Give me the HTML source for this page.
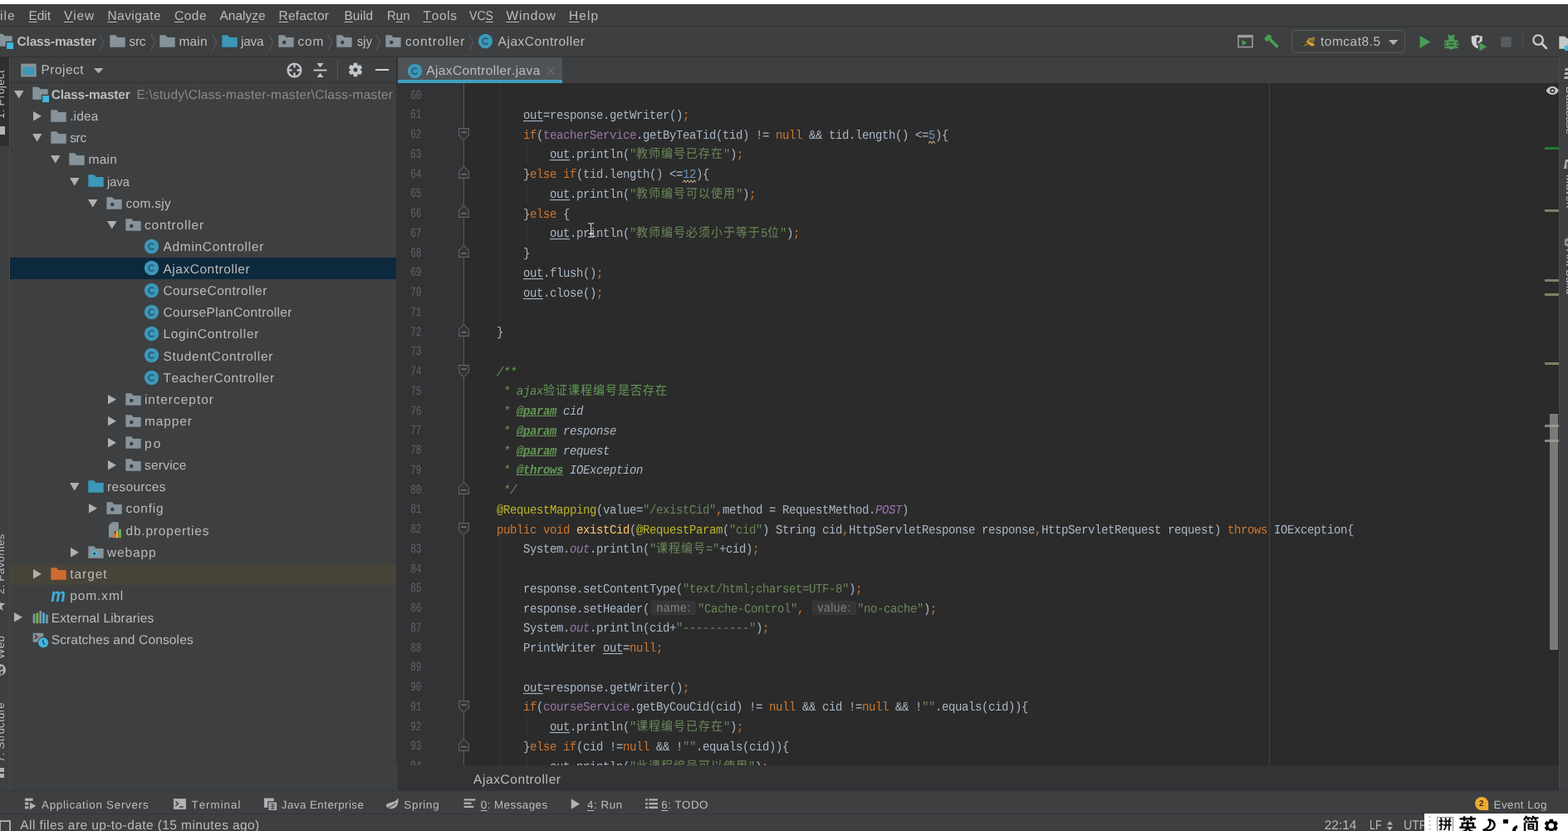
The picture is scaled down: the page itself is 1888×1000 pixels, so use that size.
<!DOCTYPE html>
<html><head><meta charset="utf-8"><title>AjaxController.java</title>
<style>
html,body{margin:0;padding:0}
body{width:1888px;height:1000px;overflow:hidden;background:#3d3f41;position:relative;font-family:"Liberation Sans",sans-serif;text-decoration-skip-ink:none;text-rendering:geometricPrecision;font-kerning:none}
#w{position:absolute;left:0;top:0;width:1888px;height:1000px;overflow:hidden;background:#3d3f41;will-change:transform}
.t{position:absolute;white-space:pre;line-height:1;font-family:"Liberation Sans",sans-serif}
.t u{text-decoration:underline;text-underline-offset:1.5px;text-decoration-thickness:1px}
.r{position:absolute;box-sizing:border-box}
.i{position:absolute;overflow:visible}
#ed{position:absolute;left:478px;top:100px;width:1399px;height:821px;background:#2b2b2b;overflow:hidden}
#code{position:absolute;left:0;top:0;width:1888px;height:921px;overflow:hidden;clip-path:inset(100px 11px 0 479px)}
.cl{position:absolute;left:566px;height:23.75px;line-height:23.75px;white-space:pre;font-family:"Liberation Mono",monospace;font-size:14px;letter-spacing:-0.4014px;color:#a9b7c6;transform:scaleY(1.09);transform-origin:0 15.6px}
.cl span{display:inline-block;height:23.75px;vertical-align:top}
.ln{position:absolute;left:494.2px;height:23.75px;line-height:23.75px;font-family:"Liberation Mono",monospace;font-size:11.2px;color:#606366;letter-spacing:-.1px;transform:scaleY(1.4)}
.cl span.z{font-family:"Liberation Mono","Noto Sans CJK SC",monospace;font-size:14px;letter-spacing:1px;font-style:normal}
.k{color:#cc7832}.s{color:#6a8759}.n{color:#6897bb}.a{color:#bbb529}.f{color:#9876aa}.fi{color:#9876aa;font-style:italic}
.m{color:#ffc66d}.c{color:#629755;font-style:italic}.cc{color:#629755}.cv{color:#a9b7c6;font-style:italic}.ct{color:#629755;font-style:italic;font-weight:bold;text-decoration:underline}
.u{text-decoration:underline;text-decoration-thickness:1px;text-underline-offset:2px}
.nw{color:#6897bb;position:relative}.wv{position:absolute;left:0;top:16.2px;overflow:visible}
.hint{position:relative}
.hint b{position:absolute;left:2px;top:1.1px;height:15.6px;line-height:16.4px;font:13.8px "Liberation Sans",sans-serif;letter-spacing:.55px;color:#808080;background:#363636;border-radius:2px;padding:0 6.5px;font-weight:normal}
</style></head>
<body>
<div id="w">
<div class="r" style="left:0px;top:0px;width:1888px;height:5px;background:#ffffff;"></div>
<div class="r" style="left:0px;top:31px;width:1888px;height:1px;background:#323536;"></div>
<span class="t" style="left:0.00px;top:11.98px;font-size:15.5px;color:#bbbbbb;letter-spacing:0.996px;">ile</span>
<span class="t" style="left:34.50px;top:11.98px;font-size:15.5px;color:#bbbbbb;letter-spacing:-0.070px;"><u>E</u>dit</span>
<span class="t" style="left:77.00px;top:11.98px;font-size:15.5px;color:#bbbbbb;letter-spacing:0.894px;"><u>V</u>iew</span>
<span class="t" style="left:129.50px;top:11.98px;font-size:15.5px;color:#bbbbbb;letter-spacing:0.403px;"><u>N</u>avigate</span>
<span class="t" style="left:210.00px;top:11.98px;font-size:15.5px;color:#bbbbbb;letter-spacing:0.481px;"><u>C</u>ode</span>
<span class="t" style="left:264.50px;top:11.98px;font-size:15.5px;color:#bbbbbb;letter-spacing:-0.024px;">Analy<u>z</u>e</span>
<span class="t" style="left:335.50px;top:11.98px;font-size:15.5px;color:#bbbbbb;letter-spacing:0.274px;"><u>R</u>efactor</span>
<span class="t" style="left:414.50px;top:11.98px;font-size:15.5px;color:#bbbbbb;letter-spacing:0.008px;"><u>B</u>uild</span>
<span class="t" style="left:465.50px;top:11.98px;font-size:15.5px;color:#bbbbbb;transform-origin:0 0;transform:scaleX(0.9671);">R<u>u</u>n</span>
<span class="t" style="left:509.50px;top:11.98px;font-size:15.5px;color:#bbbbbb;letter-spacing:0.654px;"><u>T</u>ools</span>
<span class="t" style="left:565.00px;top:11.98px;font-size:15.5px;color:#bbbbbb;transform-origin:0 0;transform:scaleX(0.9099);">VC<u>S</u></span>
<span class="t" style="left:609.50px;top:11.98px;font-size:15.5px;color:#bbbbbb;letter-spacing:0.874px;"><u>W</u>indow</span>
<span class="t" style="left:685.00px;top:11.98px;font-size:15.5px;color:#bbbbbb;letter-spacing:1.040px;"><u>H</u>elp</span>
<div class="r" style="left:0px;top:67.6px;width:1888px;height:1px;background:#313335;"></div>
<svg class="i" style="left:-5.5px;top:38px;" width="21" height="21" viewBox="0 0 16 16"><path d="M1 2h5.2l1.8 2H15v5H9v4.5H1z" fill="#87939a"/><rect x="10" y="10" width="6" height="6" fill="#40b6e0"/></svg>
<span class="t" style="left:20.50px;top:42.58px;font-size:15.5px;color:#bbbbbb;letter-spacing:-0.169px;font-weight:bold;">Class-master</span>
<svg class="i" style="left:130.7px;top:38.5px;" width="21" height="21" viewBox="0 0 16 16"><path d="M1 2.5h5.2l1.8 2H15v9H1z" fill="#87939a"/></svg>
<span class="t" style="left:155.50px;top:42.58px;font-size:15.5px;color:#bbbbbb;letter-spacing:-0.331px;">src</span>
<svg class="i" style="left:190.7px;top:38.5px;" width="21" height="21" viewBox="0 0 16 16"><path d="M1 2.5h5.2l1.8 2H15v9H1z" fill="#87939a"/></svg>
<span class="t" style="left:215.50px;top:42.58px;font-size:15.5px;color:#bbbbbb;letter-spacing:0.134px;">main</span>
<svg class="i" style="left:265.7px;top:38.5px;" width="21" height="21" viewBox="0 0 16 16"><path d="M1 2.5h5.2l1.8 2H15v9H1z" fill="#3d97b8"/></svg>
<span class="t" style="left:290.00px;top:42.58px;font-size:15.5px;color:#bbbbbb;letter-spacing:-0.312px;">java</span>
<svg class="i" style="left:333.7px;top:38.5px;" width="21" height="21" viewBox="0 0 16 16"><path d="M1 2.5h5.2l1.8 2H15v9H1z" fill="#87939a"/><circle cx="6.300" cy="9.100" r="1.750" fill="#3c3f41"/></svg>
<span class="t" style="left:358.50px;top:42.58px;font-size:15.5px;color:#bbbbbb;letter-spacing:0.859px;">com</span>
<svg class="i" style="left:404.2px;top:38.5px;" width="21" height="21" viewBox="0 0 16 16"><path d="M1 2.5h5.2l1.8 2H15v9H1z" fill="#87939a"/><circle cx="6.300" cy="9.100" r="1.750" fill="#3c3f41"/></svg>
<span class="t" style="left:429.50px;top:42.58px;font-size:15.5px;color:#bbbbbb;transform-origin:0 0;transform:scaleX(0.9502);">sjy</span>
<svg class="i" style="left:463.2px;top:38.5px;" width="21" height="21" viewBox="0 0 16 16"><path d="M1 2.5h5.2l1.8 2H15v9H1z" fill="#87939a"/><circle cx="6.300" cy="9.100" r="1.750" fill="#3c3f41"/></svg>
<span class="t" style="left:488.00px;top:42.58px;font-size:15.5px;color:#bbbbbb;letter-spacing:0.861px;">controller</span>
<svg class="i" style="left:574.3px;top:39px;" width="21" height="21" viewBox="0 0 16 16"><circle cx="8" cy="8" r="6.600" fill="#3d97b8"/><path d="M10.200 9.700a2.700 2.700 0 1 1 0-3.400" fill="none" stroke="#255a70" stroke-width="1.250"/></svg>
<span class="t" style="left:599.50px;top:42.58px;font-size:15.5px;color:#bbbbbb;letter-spacing:0.550px;">AjaxController</span>
<svg class="i" style="left:119.3px;top:40.5px;" width="7" height="20" viewBox="0 0 7 20"><path d="M.8 .5l5 9.5-5 9.500" fill="none" stroke="#56595b" stroke-width="1.2"/></svg>
<svg class="i" style="left:181.3px;top:40.5px;" width="7" height="20" viewBox="0 0 7 20"><path d="M.8 .5l5 9.5-5 9.500" fill="none" stroke="#56595b" stroke-width="1.2"/></svg>
<svg class="i" style="left:255.3px;top:40.5px;" width="7" height="20" viewBox="0 0 7 20"><path d="M.8 .5l5 9.5-5 9.500" fill="none" stroke="#56595b" stroke-width="1.2"/></svg>
<svg class="i" style="left:323.3px;top:40.5px;" width="7" height="20" viewBox="0 0 7 20"><path d="M.8 .5l5 9.5-5 9.500" fill="none" stroke="#56595b" stroke-width="1.2"/></svg>
<svg class="i" style="left:394.3px;top:40.5px;" width="7" height="20" viewBox="0 0 7 20"><path d="M.8 .5l5 9.5-5 9.500" fill="none" stroke="#56595b" stroke-width="1.2"/></svg>
<svg class="i" style="left:452.3px;top:40.5px;" width="7" height="20" viewBox="0 0 7 20"><path d="M.8 .5l5 9.5-5 9.500" fill="none" stroke="#56595b" stroke-width="1.2"/></svg>
<svg class="i" style="left:564.3px;top:40.5px;" width="7" height="20" viewBox="0 0 7 20"><path d="M.8 .5l5 9.5-5 9.500" fill="none" stroke="#56595b" stroke-width="1.2"/></svg>
<svg class="i" style="left:1488.5px;top:39px;" width="21" height="21" viewBox="0 0 16 16"><rect x="1.500" y="2.800" width="13" height="10.600" fill="none" stroke="#9b9d9f" stroke-width="1.150"/><rect x="1.500" y="2.800" width="13" height="2" fill="#9b9d9f"/><path d="M5 6.8l4.5 2.7L5 12.2z" fill="#499c54"/></svg>
<svg class="i" style="left:1520px;top:39px;" width="21" height="21" viewBox="0 0 16 16"><path d="M1.5 5.5l4-4 3.4 2.2-1.2 1.2 7.3 7.6-1.9 1.9-7.6-7.3-1.6 1.6z" fill="#499c54"/></svg>
<div class="r" style="left:1554.8px;top:36px;width:137px;height:27.5px;border:1.4px solid #585b5d;border-radius:4.5px"></div>
<svg class="i" style="left:1564.5px;top:40px;" width="21" height="21" viewBox="0 0 16 16"><path d="M1 9l5-1 3-4 2 1 2-2 1 3-2 3 2 2-3 1-3-2-5 2 2-2z" fill="#d2a43a"/><path d="M9 5l2 1 2-2 .5 2.5-2 2.5-3-1z" fill="#2b2b2b" opacity=".55"/><path d="M1 9l5-1 2 1.5-5 1.5z" fill="#1e1e1e" opacity=".7"/></svg>
<span class="t" style="left:1590.00px;top:43.38px;font-size:15.5px;color:#bbbbbb;letter-spacing:0.492px;">tomcat8.5</span>
<svg class="i" style="left:1672px;top:47.5px;" width="11.5" height="6.5" viewBox="0 0 11.5 6.5"><path d="M0 0h11.5l-5.75 6.2z" fill="#b0b0b0"/></svg>
<svg class="i" style="left:1705px;top:39.5px;" width="21" height="21" viewBox="0 0 16 16"><path d="M3.500 2.200l9.800 5.800-9.800 5.800z" fill="#499c54"/></svg>
<svg class="i" style="left:1737.2px;top:39.5px;" width="21" height="21" viewBox="0 0 16 16"><ellipse cx="8" cy="9.600" rx="4.500" ry="5.200" fill="#499c54"/><path d="M5 4.900a3 3 0 0 1 6 0z" fill="#499c54"/><path d="M1.700 7.400h2.500M11.800 7.400h2.500M1.300 10.200h2.700M12 10.200h2.700M1.900 13h2.600M11.500 13h2.600" stroke="#499c54" stroke-width="1.700"/><path d="M5.300 1.300l1.400 2M10.700 1.300l-1.400 2" stroke="#499c54" stroke-width="1.500"/><path d="M5.400 8.300h5.200M5.400 11h5.200" stroke="#3c3f41" stroke-width="1.100"/></svg>
<svg class="i" style="left:1769.5px;top:39.5px;" width="21" height="21" viewBox="0 0 16 16"><path d="M1.300 2.600C4 2.600 5.500 2 6.300 1.300 7.200 2 8.800 2.600 11.200 2.600v4.600L7.400 9.500v4.700C3.500 12.500 1.300 9.800 1.300 6z" fill="#cdcfd0"/><path d="M6 3.900c1 0 2.300-.300 3-.700v3.300L7.200 7.800v3.600C6.500 11 6 10.500 6 10z" fill="#3c3f41"/><path d="M8.600 8.400l6.900 4-6.900 4z" fill="#499c54"/></svg>
<svg class="i" style="left:1802.5px;top:39.5px;" width="21" height="21" viewBox="0 0 16 16"><rect x="3.2" y="3.2" width="9.600" height="9.600" fill="#595c5e"/></svg>
<div class="r" style="left:1833px;top:39px;width:1px;height:22px;background:#4c4f51;"></div>
<svg class="i" style="left:1844.2px;top:39.6px;" width="19.6" height="19.6" viewBox="0 0 16 16"><circle cx="6.600" cy="6.600" r="4.700" fill="none" stroke="#c6c8ca" stroke-width="1.900"/><path d="M10.100 10.100l4.500 4.500" stroke="#c6c8ca" stroke-width="2.300" stroke-linecap="round"/></svg>
<svg class="i" style="left:1876px;top:41px;" width="21" height="21" viewBox="0 0 16 16"><path d="M1 2h5.2l1.8 2H15v5H9v4.5H1z" fill="#c6c8ca"/><rect x="10" y="10" width="6" height="6" fill="#40b6e0"/></svg>
<div class="r" style="left:1883.5px;top:55.3px;width:5px;height:6px;background:#40b6e0;"></div>
<svg class="i" style="left:24px;top:73.5px;" width="21" height="21" viewBox="0 0 16 16"><rect x="1" y="2" width="14" height="12" fill="#87939a"/><rect x="2.6" y="5" width="10.8" height="7.4" fill="#3d97b8"/></svg>
<span class="t" style="left:49.50px;top:77.18px;font-size:15.5px;color:#bbbbbb;letter-spacing:0.460px;">Project</span>
<svg class="i" style="left:113px;top:82px;" width="11.5" height="6.5" viewBox="0 0 11.5 6.5"><path d="M0 0h11.5l-5.75 6.2z" fill="#b0b0b0"/></svg>
<svg class="i" style="left:343.5px;top:73.8px;" width="21" height="21" viewBox="0 0 16 16"><circle cx="8" cy="8" r="6" fill="none" stroke="#c3c5c7" stroke-width="1.800"/><path d="M8 2.500v3.200M8 10.300v3.200M2.500 8h3.200M10.300 8h3.200" stroke="#c3c5c7" stroke-width="1.800"/></svg>
<svg class="i" style="left:375px;top:73.8px;" width="21" height="21" viewBox="0 0 16 16"><path d="M2 8h12" stroke="#c3c5c7" stroke-width="1.5"/><path d="M5 1.5h6L8 5.5zM5 14.5h6L8 10.5z" fill="#c3c5c7"/></svg>
<div class="r" style="left:406px;top:72px;width:1px;height:24px;background:#515456;"></div>
<svg class="i" style="left:418px;top:74px;" width="20" height="20" viewBox="0 0 16 16"><g transform="translate(8 8)"><circle r="4.700" fill="#c3c5c7"/><path d="M-2.300-3.800L-1.700-6.600H1.700L2.300-3.800z" fill="#c3c5c7" transform="rotate(0)"/><path d="M-2.300-3.800L-1.700-6.600H1.700L2.300-3.800z" fill="#c3c5c7" transform="rotate(60)"/><path d="M-2.300-3.800L-1.700-6.600H1.700L2.300-3.800z" fill="#c3c5c7" transform="rotate(120)"/><path d="M-2.300-3.800L-1.700-6.600H1.700L2.300-3.800z" fill="#c3c5c7" transform="rotate(180)"/><path d="M-2.300-3.800L-1.700-6.600H1.700L2.300-3.800z" fill="#c3c5c7" transform="rotate(240)"/><path d="M-2.300-3.800L-1.700-6.600H1.700L2.300-3.800z" fill="#c3c5c7" transform="rotate(300)"/><circle r="2" fill="#3c3f41"/></g></svg>
<div class="r" style="left:452.2px;top:82.8px;width:15.6px;height:2.5px;background:#cfd0d1;"></div>
<div class="r" style="left:477px;top:68px;width:1.6px;height:32px;background:#2e3032;"></div>
<div class="r" style="left:12px;top:99px;width:466px;height:1px;background:#303234;"></div>
<div class="r" style="left:479px;top:68.5px;width:197.5px;height:28px;background:#4f5355;"></div>
<div class="r" style="left:479px;top:96px;width:197.5px;height:4px;background:#41a0c0;"></div>
<svg class="i" style="left:488.5px;top:74.5px;" width="21" height="21" viewBox="0 0 16 16"><circle cx="8" cy="8" r="6.600" fill="#3d97b8"/><path d="M10.200 9.700a2.700 2.700 0 1 1 0-3.400" fill="none" stroke="#255a70" stroke-width="1.250"/></svg>
<span class="t" style="left:513.20px;top:78.18px;font-size:15.5px;color:#bbbbbb;letter-spacing:0.393px;">AjaxController.java</span>
<svg class="i" style="left:657.5px;top:79.5px;" width="10.5" height="10.5" viewBox="0 0 10.5 10.5"><path d="M1 1l8.500 8.500M9.500 1L1 9.500" stroke="#6c6f71" stroke-width="1.3"/></svg>
<svg class="i" style="left:16.55px;top:108.625px;" width="11.5" height="9.5" viewBox="0 0 11.5 9.5"><path d="M0 0h11.5l-5.75 9.5z" fill="#b0b0b0"/></svg>
<svg class="i" style="left:37.5px;top:102.325px;" width="21" height="21" viewBox="0 0 16 16"><path d="M1 2h5.2l1.8 2H15v5H9v4.5H1z" fill="#87939a"/><rect x="10" y="10" width="6" height="6" fill="#40b6e0"/></svg>
<span class="t" style="left:61.70px;top:106.58px;font-size:15.5px;color:#bbbbbb;letter-spacing:-0.215px;font-weight:bold;">Class-master</span>
<span class="t" style="left:164.50px;top:106.58px;font-size:15.5px;color:#8a8a8a;letter-spacing:0.219px;">E:\study\Class-master-master\Class-master</span>
<svg class="i" style="left:39.75px;top:133.625px;" width="10" height="11.5" viewBox="0 0 10 11.5"><path d="M0 0l10 5.750-10 5.750z" fill="#b0b0b0"/></svg>
<svg class="i" style="left:59.95px;top:128.575px;" width="21" height="21" viewBox="0 0 16 16"><path d="M1 2.5h5.2l1.8 2H15v9H1z" fill="#87939a"/></svg>
<span class="t" style="left:84.15px;top:132.83px;font-size:15.5px;color:#bbbbbb;letter-spacing:0.172px;">.idea</span>
<svg class="i" style="left:39px;top:161.125px;" width="11.5" height="9.5" viewBox="0 0 11.5 9.5"><path d="M0 0h11.5l-5.75 9.5z" fill="#b0b0b0"/></svg>
<svg class="i" style="left:59.95px;top:154.825px;" width="21" height="21" viewBox="0 0 16 16"><path d="M1 2.5h5.2l1.8 2H15v9H1z" fill="#87939a"/></svg>
<span class="t" style="left:84.15px;top:159.08px;font-size:15.5px;color:#bbbbbb;letter-spacing:-0.331px;">src</span>
<svg class="i" style="left:61.45px;top:187.375px;" width="11.5" height="9.5" viewBox="0 0 11.5 9.5"><path d="M0 0h11.5l-5.75 9.5z" fill="#b0b0b0"/></svg>
<svg class="i" style="left:82.4px;top:181.075px;" width="21" height="21" viewBox="0 0 16 16"><path d="M1 2.5h5.2l1.8 2H15v9H1z" fill="#87939a"/></svg>
<span class="t" style="left:106.60px;top:185.33px;font-size:15.5px;color:#bbbbbb;letter-spacing:0.234px;">main</span>
<svg class="i" style="left:83.9px;top:213.625px;" width="11.5" height="9.5" viewBox="0 0 11.5 9.5"><path d="M0 0h11.5l-5.75 9.5z" fill="#b0b0b0"/></svg>
<svg class="i" style="left:104.85px;top:207.325px;" width="21" height="21" viewBox="0 0 16 16"><path d="M1 2.5h5.2l1.8 2H15v9H1z" fill="#3d97b8"/></svg>
<span class="t" style="left:129.05px;top:211.58px;font-size:15.5px;color:#bbbbbb;transform-origin:0 0;transform:scaleX(0.9495);">java</span>
<svg class="i" style="left:106.35px;top:239.875px;" width="11.5" height="9.5" viewBox="0 0 11.5 9.5"><path d="M0 0h11.5l-5.75 9.5z" fill="#b0b0b0"/></svg>
<svg class="i" style="left:127.3px;top:233.575px;" width="21" height="21" viewBox="0 0 16 16"><path d="M1 2.5h5.2l1.8 2H15v9H1z" fill="#87939a"/><circle cx="6.300" cy="9.100" r="1.750" fill="#3c3f41"/></svg>
<span class="t" style="left:151.50px;top:237.83px;font-size:15.5px;color:#bbbbbb;letter-spacing:0.295px;">com.sjy</span>
<svg class="i" style="left:128.8px;top:266.125px;" width="11.5" height="9.5" viewBox="0 0 11.5 9.5"><path d="M0 0h11.5l-5.75 9.5z" fill="#b0b0b0"/></svg>
<svg class="i" style="left:149.75px;top:259.825px;" width="21" height="21" viewBox="0 0 16 16"><path d="M1 2.5h5.2l1.8 2H15v9H1z" fill="#87939a"/><circle cx="6.300" cy="9.100" r="1.750" fill="#3c3f41"/></svg>
<span class="t" style="left:173.95px;top:264.08px;font-size:15.5px;color:#bbbbbb;letter-spacing:0.839px;">controller</span>
<svg class="i" style="left:172.2px;top:286.075px;" width="21" height="21" viewBox="0 0 16 16"><circle cx="8" cy="8" r="6.600" fill="#3d97b8"/><path d="M10.200 9.700a2.700 2.700 0 1 1 0-3.400" fill="none" stroke="#255a70" stroke-width="1.250"/></svg>
<span class="t" style="left:196.40px;top:290.33px;font-size:15.5px;color:#bbbbbb;letter-spacing:0.705px;">AdminController</span>
<div class="r" style="left:12px;top:310px;width:465px;height:26.25px;background:#0d293e;"></div>
<svg class="i" style="left:172.2px;top:312.325px;" width="21" height="21" viewBox="0 0 16 16"><circle cx="8" cy="8" r="6.600" fill="#3d97b8"/><path d="M10.200 9.700a2.700 2.700 0 1 1 0-3.400" fill="none" stroke="#255a70" stroke-width="1.250"/></svg>
<span class="t" style="left:196.40px;top:316.58px;font-size:15.5px;color:#bbbbbb;letter-spacing:0.535px;">AjaxController</span>
<svg class="i" style="left:172.2px;top:338.575px;" width="21" height="21" viewBox="0 0 16 16"><circle cx="8" cy="8" r="6.600" fill="#3d97b8"/><path d="M10.200 9.700a2.700 2.700 0 1 1 0-3.400" fill="none" stroke="#255a70" stroke-width="1.250"/></svg>
<span class="t" style="left:196.40px;top:342.83px;font-size:15.5px;color:#bbbbbb;letter-spacing:0.522px;">CourseController</span>
<svg class="i" style="left:172.2px;top:364.825px;" width="21" height="21" viewBox="0 0 16 16"><circle cx="8" cy="8" r="6.600" fill="#3d97b8"/><path d="M10.200 9.700a2.700 2.700 0 1 1 0-3.400" fill="none" stroke="#255a70" stroke-width="1.250"/></svg>
<span class="t" style="left:196.40px;top:369.08px;font-size:15.5px;color:#bbbbbb;letter-spacing:0.359px;">CoursePlanController</span>
<svg class="i" style="left:172.2px;top:391.075px;" width="21" height="21" viewBox="0 0 16 16"><circle cx="8" cy="8" r="6.600" fill="#3d97b8"/><path d="M10.200 9.700a2.700 2.700 0 1 1 0-3.400" fill="none" stroke="#255a70" stroke-width="1.250"/></svg>
<span class="t" style="left:196.40px;top:395.33px;font-size:15.5px;color:#bbbbbb;letter-spacing:0.706px;">LoginController</span>
<svg class="i" style="left:172.2px;top:417.325px;" width="21" height="21" viewBox="0 0 16 16"><circle cx="8" cy="8" r="6.600" fill="#3d97b8"/><path d="M10.200 9.700a2.700 2.700 0 1 1 0-3.400" fill="none" stroke="#255a70" stroke-width="1.250"/></svg>
<span class="t" style="left:196.40px;top:421.58px;font-size:15.5px;color:#bbbbbb;letter-spacing:0.711px;">StudentController</span>
<svg class="i" style="left:172.2px;top:443.575px;" width="21" height="21" viewBox="0 0 16 16"><circle cx="8" cy="8" r="6.600" fill="#3d97b8"/><path d="M10.200 9.700a2.700 2.700 0 1 1 0-3.400" fill="none" stroke="#255a70" stroke-width="1.250"/></svg>
<span class="t" style="left:196.40px;top:447.83px;font-size:15.5px;color:#bbbbbb;letter-spacing:0.604px;">TeacherController</span>
<svg class="i" style="left:129.55px;top:474.875px;" width="10" height="11.5" viewBox="0 0 10 11.5"><path d="M0 0l10 5.750-10 5.750z" fill="#b0b0b0"/></svg>
<svg class="i" style="left:149.75px;top:469.825px;" width="21" height="21" viewBox="0 0 16 16"><path d="M1 2.5h5.2l1.8 2H15v9H1z" fill="#87939a"/><circle cx="6.300" cy="9.100" r="1.750" fill="#3c3f41"/></svg>
<span class="t" style="left:173.95px;top:474.08px;font-size:15.5px;color:#bbbbbb;letter-spacing:0.977px;">interceptor</span>
<svg class="i" style="left:129.55px;top:501.125px;" width="10" height="11.5" viewBox="0 0 10 11.5"><path d="M0 0l10 5.750-10 5.750z" fill="#b0b0b0"/></svg>
<svg class="i" style="left:149.75px;top:496.075px;" width="21" height="21" viewBox="0 0 16 16"><path d="M1 2.5h5.2l1.8 2H15v9H1z" fill="#87939a"/><circle cx="6.300" cy="9.100" r="1.750" fill="#3c3f41"/></svg>
<span class="t" style="left:173.95px;top:500.33px;font-size:15.5px;color:#bbbbbb;letter-spacing:0.889px;">mapper</span>
<svg class="i" style="left:129.55px;top:527.375px;" width="10" height="11.5" viewBox="0 0 10 11.5"><path d="M0 0l10 5.750-10 5.750z" fill="#b0b0b0"/></svg>
<svg class="i" style="left:149.75px;top:522.325px;" width="21" height="21" viewBox="0 0 16 16"><path d="M1 2.5h5.2l1.8 2H15v9H1z" fill="#87939a"/><circle cx="6.300" cy="9.100" r="1.750" fill="#3c3f41"/></svg>
<span class="t" style="left:173.95px;top:526.58px;font-size:15.5px;color:#bbbbbb;letter-spacing:2.259px;">po</span>
<svg class="i" style="left:129.55px;top:553.625px;" width="10" height="11.5" viewBox="0 0 10 11.5"><path d="M0 0l10 5.750-10 5.750z" fill="#b0b0b0"/></svg>
<svg class="i" style="left:149.75px;top:548.575px;" width="21" height="21" viewBox="0 0 16 16"><path d="M1 2.5h5.2l1.8 2H15v9H1z" fill="#87939a"/><circle cx="6.300" cy="9.100" r="1.750" fill="#3c3f41"/></svg>
<span class="t" style="left:173.95px;top:552.83px;font-size:15.5px;color:#bbbbbb;letter-spacing:0.234px;">service</span>
<svg class="i" style="left:83.9px;top:581.125px;" width="11.5" height="9.5" viewBox="0 0 11.5 9.5"><path d="M0 0h11.5l-5.75 9.5z" fill="#b0b0b0"/></svg>
<svg class="i" style="left:104.85px;top:574.825px;" width="21" height="21" viewBox="0 0 16 16"><path d="M1 2.5h5.2l1.8 2H15v9H1z" fill="#3d97b8"/></svg>
<span class="t" style="left:129.05px;top:579.08px;font-size:15.5px;color:#bbbbbb;letter-spacing:0.305px;">resources</span>
<svg class="i" style="left:107.1px;top:606.125px;" width="10" height="11.5" viewBox="0 0 10 11.5"><path d="M0 0l10 5.750-10 5.750z" fill="#b0b0b0"/></svg>
<svg class="i" style="left:127.3px;top:601.075px;" width="21" height="21" viewBox="0 0 16 16"><path d="M1 2.5h5.2l1.8 2H15v9H1z" fill="#87939a"/><circle cx="6.300" cy="9.100" r="1.750" fill="#3c3f41"/></svg>
<span class="t" style="left:151.50px;top:605.33px;font-size:15.5px;color:#bbbbbb;letter-spacing:0.728px;">config</span>
<svg class="i" style="left:127.3px;top:627.325px;" width="21" height="21" viewBox="0 0 16 16"><path d="M6.500 1H12v8.500H8V15H3V4.500z" fill="#87939a"/><path d="M3 3.600L5.600 1v2.600z" fill="#87939a" opacity=".7"/><rect x="7" y="11.500" width="2.200" height="4" fill="#e8743b"/><rect x="9.600" y="9.500" width="2.200" height="6" fill="#f2b33d"/><rect x="12.200" y="7.500" width="2.300" height="8" fill="#5fae49"/></svg>
<span class="t" style="left:151.50px;top:631.58px;font-size:15.5px;color:#bbbbbb;letter-spacing:0.794px;">db.properties</span>
<svg class="i" style="left:84.65px;top:658.625px;" width="10" height="11.5" viewBox="0 0 10 11.5"><path d="M0 0l10 5.750-10 5.750z" fill="#b0b0b0"/></svg>
<svg class="i" style="left:104.85px;top:653.575px;" width="21" height="21" viewBox="0 0 16 16"><path d="M1 2.5h5.2l1.8 2H15v9H1z" fill="#87939a"/><circle cx="6.5" cy="9.3" r="2.6" fill="#40b6e0"/><circle cx="6.5" cy="9.3" r="1.1" fill="#3c3f41"/></svg>
<span class="t" style="left:129.05px;top:657.83px;font-size:15.5px;color:#bbbbbb;letter-spacing:0.841px;">webapp</span>
<div class="r" style="left:12px;top:677.5px;width:465px;height:26.25px;background:#47443a;"></div>
<svg class="i" style="left:39.75px;top:684.875px;" width="10" height="11.5" viewBox="0 0 10 11.5"><path d="M0 0l10 5.750-10 5.750z" fill="#b0b0b0"/></svg>
<svg class="i" style="left:59.95px;top:679.825px;" width="21" height="21" viewBox="0 0 16 16"><path d="M1 2.5h5.2l1.8 2H15v9H1z" fill="#cf6a32"/></svg>
<span class="t" style="left:84.15px;top:684.08px;font-size:15.5px;color:#bbbbbb;letter-spacing:0.973px;">target</span>
<svg class="i" style="left:59.95px;top:706.075px;" width="21" height="21" viewBox="0 0 16 16"><text x="0.900" y="13.600" font-family="Liberation Sans" font-style="italic" font-weight="bold" font-size="17.600" textLength="13.400" lengthAdjust="spacingAndGlyphs" fill="#41aede">m</text></svg>
<span class="t" style="left:84.15px;top:710.33px;font-size:15.5px;color:#bbbbbb;letter-spacing:0.906px;">pom.xml</span>
<svg class="i" style="left:17.3px;top:737.375px;" width="10" height="11.5" viewBox="0 0 10 11.5"><path d="M0 0l10 5.750-10 5.750z" fill="#b0b0b0"/></svg>
<svg class="i" style="left:37.5px;top:732.325px;" width="21" height="21" viewBox="0 0 16 16"><rect x="1.250" y="4.950" width="2.100" height="8.850" fill="#87939a"/><rect x="4.200" y="4.100" width="2.100" height="9.700" fill="#74b84a"/><rect x="7.100" y="2.300" width="2.100" height="11.500" fill="#87939a"/><rect x="10.050" y="4.100" width="2.100" height="9.700" fill="#40b6e0"/><rect x="13" y="5.800" width="2.100" height="8" fill="#87939a"/></svg>
<span class="t" style="left:61.70px;top:736.58px;font-size:15.5px;color:#bbbbbb;letter-spacing:0.170px;">External Libraries</span>
<svg class="i" style="left:37.5px;top:758.575px;" width="21" height="21" viewBox="0 0 16 16"><path d="M1.250 2.100h9.650v8.400H1.250z" fill="#87939a"/><path d="M2.800 3.800l2.600 1.900-2.600 1.900" stroke="#3c3f41" stroke-width="1.200" fill="none"/><circle cx="10.750" cy="10.900" r="5.300" fill="#3c3f41"/><circle cx="10.750" cy="10.900" r="4.600" fill="#40b6e0"/><path d="M10.600 8.300v2.900l1.900 1.300" stroke="#2b4a57" stroke-width="1.100" fill="none"/></svg>
<span class="t" style="left:61.70px;top:762.83px;font-size:15.5px;color:#bbbbbb;letter-spacing:0.142px;">Scratches and Consoles</span>
<div id="ed"></div>
<div class="r" style="left:477.3px;top:100px;width:80.7px;height:821px;background:#313335;"></div>
<div class="r" style="left:557.6px;top:100px;width:1px;height:821px;background:#555759;"></div>
<div class="r" style="left:601.5px;top:102.125px;width:1px;height:285px;background:#393939;"></div>
<div class="r" style="left:601.5px;top:648.375px;width:1px;height:285px;background:#393939;"></div>
<div class="r" style="left:633.5px;top:173.375px;width:1px;height:23.75px;background:#363636;"></div>
<div class="r" style="left:633.5px;top:220.875px;width:1px;height:23.75px;background:#363636;"></div>
<div class="r" style="left:633.5px;top:268.375px;width:1px;height:23.75px;background:#363636;"></div>
<div class="r" style="left:633.5px;top:862.125px;width:1px;height:23.75px;background:#363636;"></div>
<div class="r" style="left:633.5px;top:909.625px;width:1px;height:23.75px;background:#363636;"></div>
<div class="r" style="left:1527.5px;top:100px;width:1px;height:821px;background:#424445;"></div>
<svg class="i" style="left:551.5px;top:154.225px;" width="13" height="15.2" viewBox="0 0 13 15.2"><path d="M.6.6h11.8v8.2L6.5 14.6.6 8.800z" fill="#313335" stroke="#606366" stroke-width="1.1"/><path d="M3.3 5.2h6.4" stroke="#8a8d90" stroke-width="1.1"/></svg>
<svg class="i" style="left:551.5px;top:439.225px;" width="13" height="15.2" viewBox="0 0 13 15.2"><path d="M.6.6h11.8v8.2L6.5 14.6.6 8.800z" fill="#313335" stroke="#606366" stroke-width="1.1"/><path d="M3.3 5.2h6.4" stroke="#8a8d90" stroke-width="1.1"/></svg>
<svg class="i" style="left:551.5px;top:629.225px;" width="13" height="15.2" viewBox="0 0 13 15.2"><path d="M.6.6h11.8v8.2L6.5 14.6.6 8.800z" fill="#313335" stroke="#606366" stroke-width="1.1"/><path d="M3.3 5.2h6.4" stroke="#8a8d90" stroke-width="1.1"/></svg>
<svg class="i" style="left:551.5px;top:842.975px;" width="13" height="15.2" viewBox="0 0 13 15.2"><path d="M.6.6h11.8v8.2L6.5 14.6.6 8.800z" fill="#313335" stroke="#606366" stroke-width="1.1"/><path d="M3.3 5.2h6.4" stroke="#8a8d90" stroke-width="1.1"/></svg>
<svg class="i" style="left:551.5px;top:199.825px;" width="13" height="15.2" viewBox="0 0 13 15.2"><path d="M.6 14.4h11.8V6.2L6.5.4.6 6.200z" fill="#313335" stroke="#606366" stroke-width="1.1"/><path d="M3.3 9.8h6.4" stroke="#8a8d90" stroke-width="1.1"/></svg>
<svg class="i" style="left:551.5px;top:247.325px;" width="13" height="15.2" viewBox="0 0 13 15.2"><path d="M.6 14.4h11.8V6.2L6.5.4.6 6.200z" fill="#313335" stroke="#606366" stroke-width="1.1"/><path d="M3.3 9.8h6.4" stroke="#8a8d90" stroke-width="1.1"/></svg>
<svg class="i" style="left:551.5px;top:294.825px;" width="13" height="15.2" viewBox="0 0 13 15.2"><path d="M.6 14.4h11.8V6.2L6.5.4.6 6.200z" fill="#313335" stroke="#606366" stroke-width="1.1"/><path d="M3.3 9.8h6.4" stroke="#8a8d90" stroke-width="1.1"/></svg>
<svg class="i" style="left:551.5px;top:389.825px;" width="13" height="15.2" viewBox="0 0 13 15.2"><path d="M.6 14.4h11.8V6.2L6.5.4.6 6.200z" fill="#313335" stroke="#606366" stroke-width="1.1"/><path d="M3.3 9.8h6.4" stroke="#8a8d90" stroke-width="1.1"/></svg>
<svg class="i" style="left:551.5px;top:579.825px;" width="13" height="15.2" viewBox="0 0 13 15.2"><path d="M.6 14.4h11.8V6.2L6.5.4.6 6.200z" fill="#313335" stroke="#606366" stroke-width="1.1"/><path d="M3.3 9.8h6.4" stroke="#8a8d90" stroke-width="1.1"/></svg>
<svg class="i" style="left:551.5px;top:888.575px;" width="13" height="15.2" viewBox="0 0 13 15.2"><path d="M.6 14.4h11.8V6.2L6.5.4.6 6.200z" fill="#313335" stroke="#606366" stroke-width="1.1"/><path d="M3.3 9.8h6.4" stroke="#8a8d90" stroke-width="1.1"/></svg>
<div class="r" style="left:1866px;top:497.5px;width:10px;height:284.5px;background:rgba(150,150,150,.74);"></div>
<div class="r" style="left:1860px;top:177.4px;width:17px;height:2.8px;background:#1b8229;"></div>
<div class="r" style="left:1860px;top:252px;width:17px;height:3px;background:rgba(134,131,108,.95);"></div>
<div class="r" style="left:1860px;top:336px;width:17px;height:3px;background:rgba(134,131,108,.95);"></div>
<div class="r" style="left:1860px;top:353px;width:17px;height:3px;background:rgba(134,131,108,.95);"></div>
<div class="r" style="left:1860px;top:436.3px;width:17px;height:3px;background:rgba(134,131,108,.95);"></div>
<div class="r" style="left:1860px;top:511.3px;width:17px;height:3px;background:rgba(160,158,140,.8);"></div>
<div class="r" style="left:1860px;top:529px;width:17px;height:3px;background:rgba(160,158,140,.8);"></div>
<svg class="i" style="left:1860.5px;top:99.3px;" width="16.5" height="20" viewBox="0 0 16 16"><path d="M.6 8C2.5 4.6 5 3.2 8 3.2s5.5 1.4 7.4 4.8c-1.9 3.4-4.4 4.8-7.4 4.8S2.5 11.4.6 8z" fill="#c4c6c8"/><circle cx="8" cy="8" r="3" fill="#2b2b2b"/><circle cx="8" cy="8" r="1.5" fill="#c4c6c8"/></svg>
<svg class="i" style="left:707.2px;top:267.5px;" width="9" height="18" viewBox="0 0 9 18"><path d="M1 .8h2.6l1 .8 1-.8H8M1 17.2h2.6l1-.8 1 .8H8M4.6 1.6v14.8" fill="none" stroke="#c8c8c8" stroke-width="1.2"/><path d="M2.2 13.2h4.8" stroke="#e8e8e8" stroke-width="1.6"/></svg>
<div id="code">
<span class="ln" style="top:105.53px">60</span>
<span class="ln" style="top:129.28px">61</span>
<div class="cl" style="top:128.78px"><span class="d">        </span><span class="u">out</span><span class="d">=response.getWriter()</span><span class="k">;</span></div>
<span class="ln" style="top:153.03px">62</span>
<div class="cl" style="top:152.53px"><span class="d">        </span><span class="k">if</span><span class="d">(</span><span class="f">teacherService</span><span class="d">.getByTeaTid(tid) != </span><span class="k">null</span><span class="d"> &amp;&amp; tid.length() &lt;=</span><span class="nw">5<svg class="wv" width="8" height="4" viewBox="0 0 8 4"><polyline points="0 3.3 2 0.7 4 3.3 6 0.7 8 3.3" fill="none" stroke="#b0a679" stroke-width="1"/></svg></span><span class="d">){</span></div>
<span class="ln" style="top:176.78px">63</span>
<div class="cl" style="top:176.28px"><span class="d">            </span><span class="u">out</span><span class="d">.println(</span><span class="s">&quot;<span class="z">教师编号已存在</span>&quot;</span><span class="d">)</span><span class="k">;</span></div>
<span class="ln" style="top:200.53px">64</span>
<div class="cl" style="top:200.03px"><span class="d">        </span><span class="d">}</span><span class="k">else if</span><span class="d">(tid.length() &lt;=</span><span class="nw">12<svg class="wv" width="16" height="4" viewBox="0 0 16 4"><polyline points="0 3.3 2 0.7 4 3.3 6 0.7 8 3.3 10 0.7 12 3.3 14 0.7 16 3.3" fill="none" stroke="#b0a679" stroke-width="1"/></svg></span><span class="d">){</span></div>
<span class="ln" style="top:224.28px">65</span>
<div class="cl" style="top:223.78px"><span class="d">            </span><span class="u">out</span><span class="d">.println(</span><span class="s">&quot;<span class="z">教师编号可以使用</span>&quot;</span><span class="d">)</span><span class="k">;</span></div>
<span class="ln" style="top:248.03px">66</span>
<div class="cl" style="top:247.53px"><span class="d">        </span><span class="d">}</span><span class="k">else</span><span class="d"> {</span></div>
<span class="ln" style="top:271.77px">67</span>
<div class="cl" style="top:271.27px"><span class="d">            </span><span class="u">out</span><span class="d">.println(</span><span class="s">&quot;<span class="z">教师编号必须小于等于</span>5<span class="z">位</span>&quot;</span><span class="d">)</span><span class="k">;</span></div>
<span class="ln" style="top:295.52px">68</span>
<div class="cl" style="top:295.02px"><span class="d">        </span><span class="d">}</span></div>
<span class="ln" style="top:319.27px">69</span>
<div class="cl" style="top:318.77px"><span class="d">        </span><span class="u">out</span><span class="d">.flush()</span><span class="k">;</span></div>
<span class="ln" style="top:343.02px">70</span>
<div class="cl" style="top:342.52px"><span class="d">        </span><span class="u">out</span><span class="d">.close()</span><span class="k">;</span></div>
<span class="ln" style="top:366.77px">71</span>
<span class="ln" style="top:390.52px">72</span>
<div class="cl" style="top:390.02px"><span class="d">    </span><span class="d">}</span></div>
<span class="ln" style="top:414.27px">73</span>
<span class="ln" style="top:438.02px">74</span>
<div class="cl" style="top:437.52px"><span class="d">    </span><span class="c">/**</span></div>
<span class="ln" style="top:461.77px">75</span>
<div class="cl" style="top:461.27px"><span class="d">     </span><span class="c">* ajax</span><span class="cc"><span class="z">验证课程编号是否存在</span></span></div>
<span class="ln" style="top:485.52px">76</span>
<div class="cl" style="top:485.02px"><span class="d">     </span><span class="c">* </span><span class="ct">@param</span><span class="cv"> cid</span></div>
<span class="ln" style="top:509.27px">77</span>
<div class="cl" style="top:508.77px"><span class="d">     </span><span class="c">* </span><span class="ct">@param</span><span class="cv"> response</span></div>
<span class="ln" style="top:533.02px">78</span>
<div class="cl" style="top:532.52px"><span class="d">     </span><span class="c">* </span><span class="ct">@param</span><span class="cv"> request</span></div>
<span class="ln" style="top:556.77px">79</span>
<div class="cl" style="top:556.27px"><span class="d">     </span><span class="c">* </span><span class="ct">@throws</span><span class="cv"> IOException</span></div>
<span class="ln" style="top:580.52px">80</span>
<div class="cl" style="top:580.02px"><span class="d">     </span><span class="c">*/</span></div>
<span class="ln" style="top:604.27px">81</span>
<div class="cl" style="top:603.77px"><span class="d">    </span><span class="a">@RequestMapping</span><span class="d">(value=</span><span class="s">&quot;/existCid&quot;</span><span class="k">,</span><span class="d">method = RequestMethod.</span><span class="fi">POST</span><span class="d">)</span></div>
<span class="ln" style="top:628.02px">82</span>
<div class="cl" style="top:627.52px"><span class="d">    </span><span class="k">public void </span><span class="m">existCid</span><span class="d">(</span><span class="a">@RequestParam</span><span class="d">(</span><span class="s">&quot;cid&quot;</span><span class="d">) String cid</span><span class="k">,</span><span class="d">HttpServletResponse response</span><span class="k">,</span><span class="d">HttpServletRequest request) </span><span class="k">throws </span><span class="d">IOException{</span></div>
<span class="ln" style="top:651.77px">83</span>
<div class="cl" style="top:651.27px"><span class="d">        </span><span class="d">System.</span><span class="fi">out</span><span class="d">.println(</span><span class="s">&quot;<span class="z">课程编号</span>=&quot;</span><span class="d">+cid)</span><span class="k">;</span></div>
<span class="ln" style="top:675.52px">84</span>
<span class="ln" style="top:699.27px">85</span>
<div class="cl" style="top:698.77px"><span class="d">        </span><span class="d">response.setContentType(</span><span class="s">&quot;text/html;charset=UTF-8&quot;</span><span class="d">)</span><span class="k">;</span></div>
<span class="ln" style="top:723.02px">86</span>
<div class="cl" style="top:722.52px"><span class="d">        </span><span class="d">response.setHeader(</span><span class="hint" style="width:58px"><b>name:</b></span><span class="s">&quot;Cache-Control&quot;</span><span class="k">,</span><span class="d"> </span><span class="hint" style="width:56px"><b>value:</b></span><span class="s">&quot;no-cache&quot;</span><span class="d">)</span><span class="k">;</span></div>
<span class="ln" style="top:746.77px">87</span>
<div class="cl" style="top:746.27px"><span class="d">        </span><span class="d">System.</span><span class="fi">out</span><span class="d">.println(cid+</span><span class="s">&quot;----------&quot;</span><span class="d">)</span><span class="k">;</span></div>
<span class="ln" style="top:770.52px">88</span>
<div class="cl" style="top:770.02px"><span class="d">        </span><span class="d">PrintWriter </span><span class="u">out</span><span class="d">=</span><span class="k">null</span><span class="k">;</span></div>
<span class="ln" style="top:794.27px">89</span>
<span class="ln" style="top:818.02px">90</span>
<div class="cl" style="top:817.52px"><span class="d">        </span><span class="u">out</span><span class="d">=response.getWriter()</span><span class="k">;</span></div>
<span class="ln" style="top:841.77px">91</span>
<div class="cl" style="top:841.27px"><span class="d">        </span><span class="k">if</span><span class="d">(</span><span class="f">courseService</span><span class="d">.getByCouCid(cid) != </span><span class="k">null</span><span class="d"> &amp;&amp; cid !=</span><span class="k">null</span><span class="d"> &amp;&amp; !</span><span class="s">&quot;&quot;</span><span class="d">.equals(cid)){</span></div>
<span class="ln" style="top:865.52px">92</span>
<div class="cl" style="top:865.02px"><span class="d">            </span><span class="u">out</span><span class="d">.println(</span><span class="s">&quot;<span class="z">课程编号已存在</span>&quot;</span><span class="d">)</span><span class="k">;</span></div>
<span class="ln" style="top:889.27px">93</span>
<div class="cl" style="top:888.77px"><span class="d">        </span><span class="d">}</span><span class="k">else if</span><span class="d">(cid !=</span><span class="k">null</span><span class="d"> &amp;&amp; !</span><span class="s">&quot;&quot;</span><span class="d">.equals(cid)){</span></div>
<span class="ln" style="top:913.02px">94</span>
<div class="cl" style="top:912.52px"><span class="d">            </span><span class="u">out</span><span class="d">.println(</span><span class="s">&quot;<span class="z">此课程编号可以使用</span>&quot;</span><span class="d">)</span><span class="k">;</span></div>
</div>
<div class="r" style="left:0px;top:68px;width:11px;height:108px;background:#2d2f30;"></div>
<div class="r" style="left:11px;top:68px;width:1px;height:884px;background:#484a4c;"></div>
<div class="r" style="left:0px;top:151.5px;width:6px;height:10px;background:#afb1b3;"></div>
<span class="t" style="left:-5.9px;top:143px;font-size:13.2px;color:#bbbbbb;transform-origin:0 0;transform:rotate(-90deg);letter-spacing:.32px">1: Project</span>
<span class="t" style="left:-5.9px;top:714.5px;font-size:13.2px;color:#bbbbbb;transform-origin:0 0;transform:rotate(-90deg);letter-spacing:.32px">2: Favorites</span>
<span class="t" style="left:-5.9px;top:792.5px;font-size:13.2px;color:#bbbbbb;transform-origin:0 0;transform:rotate(-90deg);letter-spacing:.32px">Web</span>
<span class="t" style="left:-5.9px;top:916.5px;font-size:13.2px;color:#bbbbbb;transform-origin:0 0;transform:rotate(-90deg);letter-spacing:.32px">7: Structure</span>
<svg class="i" style="left:-9.5px;top:719.5px;" width="16" height="16" viewBox="0 0 16 16"><path d="M8.0 0.5L9.9 5.8L15.6 6.0L11.1 9.5L12.7 15.0L8.0 11.8L3.3 15.0L4.9 9.5L0.4 6.0L6.1 5.8z" fill="#afb1b3"/></svg>
<svg class="i" style="left:-8.5px;top:797.5px;" width="16" height="16" viewBox="0 0 16 16"><circle cx="8" cy="8" r="7" fill="#afb1b3"/><path d="M9 3.500l3 1.500-1.500 3-2.500.500zM8.500 10l3.500-.500-1 3.500-2.500 1z" fill="#3c3f41"/></svg>
<div class="r" style="left:0px;top:924px;width:5px;height:4.5px;background:#afb1b3;"></div>
<div class="r" style="left:0px;top:931px;width:5px;height:4.5px;background:#afb1b3;"></div>
<div class="r" style="left:1877px;top:68px;width:11px;height:884px;background:#3d3f41;"></div>
<div class="r" style="left:1877px;top:68px;width:1px;height:884px;background:#47494b;"></div>
<span class="t" style="left:1896.7px;top:104px;font-size:13.2px;color:#bbbbbb;transform-origin:0 0;transform:rotate(90deg);letter-spacing:.2px">Database</span>
<span class="t" style="left:1896.7px;top:210px;font-size:13.2px;color:#bbbbbb;transform-origin:0 0;transform:rotate(90deg);letter-spacing:.2px">Maven</span>
<span class="t" style="left:1896.7px;top:300px;font-size:13.2px;color:#bbbbbb;transform-origin:0 0;transform:rotate(90deg);letter-spacing:.2px">Ant Build</span>
<svg class="i" style="left:1882.6px;top:82px;" width="8" height="14" viewBox="0 0 8 14"><path d="M2 0h6v3H1zM1.5 5h6.5v3H.5zM1 10h7v3H0z" fill="#afb1b3"/></svg>
<svg class="i" style="left:1882.6px;top:192px;" width="8" height="12" viewBox="0 0 8 12"><path d="M2 0h6v11H0z" fill="#afb1b3"/><path d="M4 3v8" stroke="#3c3f41" stroke-width="1.5"/></svg>
<svg class="i" style="left:1883.5px;top:285px;" width="7" height="13" viewBox="0 0 7 13"><path d="M0 3l6-3v4l-5 3 5 2v4L0 10z" fill="#afb1b3" opacity=".75"/></svg>
<div class="r" style="left:479px;top:921px;width:1398px;height:30.5px;background:#313335;"></div>
<span class="t" style="left:570.00px;top:930.78px;font-size:15.5px;color:#bbbbbb;letter-spacing:0.589px;">AjaxController</span>
<div class="r" style="left:0px;top:951.3px;width:1888px;height:1px;background:#34373a;"></div>
<svg class="i" style="left:28.5px;top:958.5px;" width="17" height="17" viewBox="0 0 16 16"><rect x="1" y="1.5" width="9" height="3" fill="#afb1b3"/><rect x="1" y="6" width="4" height="3" fill="#afb1b3"/><rect x="1" y="10.5" width="4" height="3" fill="#afb1b3"/><path d="M6.5 6l7 4.2-7 4.2z" fill="#afb1b3"/></svg>
<span class="t" style="left:50.00px;top:962.36px;font-size:13.4px;color:#bbbbbb;letter-spacing:0.736px;">Application Servers</span>
<svg class="i" style="left:208.3px;top:958.5px;" width="17" height="17" viewBox="0 0 16 16"><rect x="1" y="2" width="14" height="12" fill="#afb1b3"/><path d="M3.2 5l3 2.6-3 2.6" stroke="#3c3f41" stroke-width="1.4" fill="none"/><path d="M7.5 11.3h4.5" stroke="#3c3f41" stroke-width="1.4"/></svg>
<span class="t" style="left:230.50px;top:962.36px;font-size:13.4px;color:#bbbbbb;letter-spacing:0.980px;">Terminal</span>
<svg class="i" style="left:317px;top:958.5px;" width="17" height="17" viewBox="0 0 16 16"><path d="M1 1.5h11v3.5H5v7H1z" fill="#afb1b3"/><rect x="6.2" y="6.2" width="9" height="8.8" fill="#afb1b3"/><path d="M8 8.5h5.4M8 10.8h5.4M8 13h5.4M10.7 8v6" stroke="#3c3f41" stroke-width=".9"/></svg>
<span class="t" style="left:338.80px;top:962.36px;font-size:13.4px;color:#bbbbbb;letter-spacing:0.436px;">Java Enterprise</span>
<svg class="i" style="left:464.3px;top:958.5px;" width="17" height="17" viewBox="0 0 16 16"><path d="M14.5 1.5c.8 5.5-1 11.5-7.5 12-2.5.2-4.5-.8-5.8-2.6C.5 10 1 8.3 3.2 7.400 7 5.800 11.500 6 14.500 1.500z" fill="#afb1b3"/><path d="M1.500 13.500C4.500 11.500 8.500 10.500 12 7" stroke="#3c3f41" stroke-width="1" fill="none"/></svg>
<span class="t" style="left:486.30px;top:962.36px;font-size:13.4px;color:#bbbbbb;letter-spacing:0.733px;">Spring</span>
<svg class="i" style="left:556.5px;top:958.5px;" width="17" height="17" viewBox="0 0 16 16"><path d="M1.5 3.2h13M1.5 7.2h8.5M1.5 11.2h11" stroke="#afb1b3" stroke-width="2.2"/></svg>
<span class="t" style="left:578.80px;top:962.36px;font-size:13.4px;color:#bbbbbb;letter-spacing:0.443px;"><u>0</u>: Messages</span>
<svg class="i" style="left:684.3px;top:958.5px;" width="17" height="17" viewBox="0 0 16 16"><path d="M3.500 2.200l9.800 5.800-9.800 5.800z" fill="#afb1b3"/></svg>
<span class="t" style="left:707.00px;top:962.36px;font-size:13.4px;color:#bbbbbb;letter-spacing:0.544px;"><u>4</u>: Run</span>
<svg class="i" style="left:776px;top:958.5px;" width="17" height="17" viewBox="0 0 16 16"><path d="M5 3.2h10M5 7.6h10M5 12h10" stroke="#afb1b3" stroke-width="2.2"/><path d="M1 3.2h2.6M1 7.6h2.6M1 12h2.6" stroke="#afb1b3" stroke-width="2.2"/></svg>
<span class="t" style="left:796.30px;top:962.36px;font-size:13.4px;color:#bbbbbb;letter-spacing:0.430px;"><u>6</u>: TODO</span>
<svg class="i" style="left:1776px;top:959px;" width="16.2" height="16" viewBox="0 0 16.2 16"><path d="M8.100 0a8.100 8 0 0 1 8.100 8v8H8.100a8.100 8 0 0 1 0-16z" fill="#f0a930"/></svg>
<span class="t" style="left:1781.00px;top:962.73px;font-size:10px;color:#3a2e10;letter-spacing:0.938px;font-weight:bold;">2</span>
<span class="t" style="left:1798.60px;top:962.16px;font-size:13.4px;color:#bbbbbb;letter-spacing:0.432px;">Event Log</span>
<div class="r" style="left:0px;top:979.3px;width:1888px;height:1px;background:#34373a;"></div>
<div class="r" style="left:-1px;top:987px;width:13.5px;height:15px;border:2px solid #a6a8aa"></div>
<span class="t" style="left:24.30px;top:985.78px;font-size:15.5px;color:#bbbbbb;letter-spacing:0.415px;">All files are up-to-date (15 minutes ago)</span>
<span class="t" style="left:1594.80px;top:986.38px;font-size:15.5px;color:#bbbbbb;letter-spacing:-0.072px;">22:14</span>
<span class="t" style="left:1649.00px;top:986.38px;font-size:15.5px;color:#bbbbbb;transform-origin:0 0;transform:scaleX(0.8016);">LF</span>
<svg class="i" style="left:1669.5px;top:988px;" width="7" height="12" viewBox="0 0 7 12"><path d="M3.5 0L7 4.5H0zM3.5 11.5L0 7h7z" fill="#afb1b3"/></svg>
<span class="t" style="left:1689.80px;top:986.38px;font-size:15.5px;color:#bbbbbb;transform-origin:0 0;transform:scaleX(0.9109);">UTF-8</span>
<div class="r" style="left:1715px;top:978.8px;width:173px;height:22px;background:#ffffff;"></div>
<div class="r" style="left:1720.4px;top:981.7px;width:2.5px;height:2.5px;background:#d2d2d2;"></div>
<div class="r" style="left:1720.4px;top:986.7px;width:2.5px;height:2.5px;background:#d2d2d2;"></div>
<div class="r" style="left:1720.4px;top:991.7px;width:2.5px;height:2.5px;background:#d2d2d2;"></div>
<div class="r" style="left:1720.4px;top:996.7px;width:2.5px;height:2.5px;background:#d2d2d2;"></div>
<div class="r" style="left:1730.4px;top:983.4px;width:19.5px;height:20px;border:1.5px solid #8a8a8a"></div>
<span class="t" style="left:1732px;top:985.2px;font-size:16.5px;color:#111;font-weight:bold;font-family:'Liberation Sans','Noto Sans CJK SC',sans-serif;">拼</span>
<span class="t" style="left:1756.2px;top:982.6px;font-size:22px;color:#000;font-weight:bold;font-family:'Liberation Sans','Noto Sans CJK SC',sans-serif;">英</span>
<svg class="i" style="left:1785px;top:985.3px;" width="17" height="16" viewBox="0 0 17 16"><path d="M7.500 1.300C13 1.600 15.600 6 14.200 10 12.600 13.800 7 15.600 1.300 13.600 6 12.600 9.400 9 9.400 5.600 9.400 3.900 8.700 2.500 7.500 1.300z" fill="#fff" stroke="#000" stroke-width="2.300" stroke-linejoin="round"/></svg>
<div class="r" style="left:1810px;top:985.5px;width:5.8px;height:5.9px;background:#000;"></div>
<svg class="i" style="left:1819.5px;top:991.5px;" width="8" height="9" viewBox="0 0 8 9"><path d="M1.200 9C.500 5.500 2 3 6.500.800L7.500 4C5.500 5 4.800 6.800 5.200 9z" fill="#000"/></svg>
<span class="t" style="left:1833px;top:983.2px;font-size:20.5px;color:#000;font-weight:bold;font-family:'Liberation Sans','Noto Sans CJK SC',sans-serif;">简</span>
<svg class="i" style="left:1858.2px;top:983.8px;" width="19.6" height="19.6" viewBox="0 0 16 16"><g transform="translate(8 8)"><circle r="5" fill="#000"/><path d="M-2.300-3.800L-1.700-6.600H1.700L2.300-3.800z" fill="#000" transform="rotate(0)"/><path d="M-2.300-3.800L-1.700-6.600H1.700L2.300-3.800z" fill="#000" transform="rotate(60)"/><path d="M-2.300-3.800L-1.700-6.600H1.700L2.300-3.800z" fill="#000" transform="rotate(120)"/><path d="M-2.300-3.800L-1.700-6.600H1.700L2.300-3.800z" fill="#000" transform="rotate(180)"/><path d="M-2.300-3.800L-1.700-6.600H1.700L2.300-3.800z" fill="#000" transform="rotate(240)"/><path d="M-2.300-3.800L-1.700-6.600H1.700L2.300-3.800z" fill="#000" transform="rotate(300)"/><circle r="2.700" fill="#fff"/></g></svg>
</div>
</body></html>
